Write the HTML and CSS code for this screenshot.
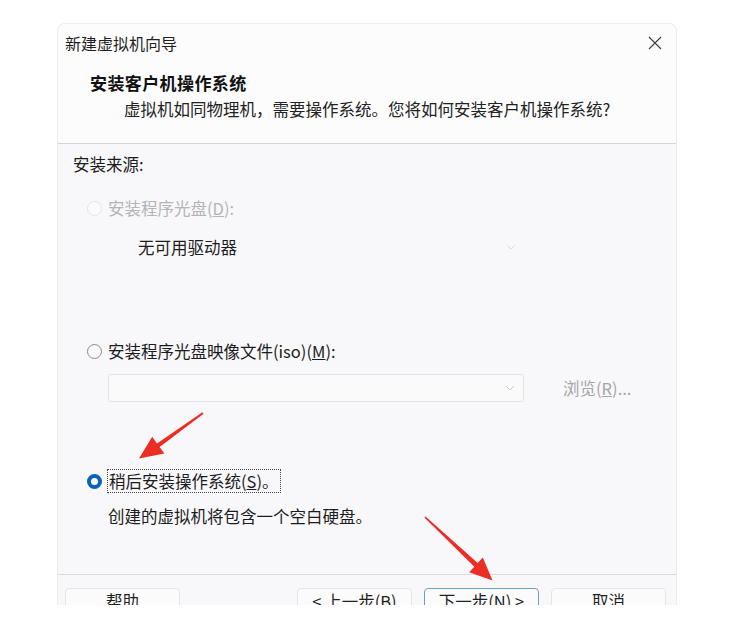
FILE: index.html
```html
<!DOCTYPE html>
<html lang="zh-CN">
<head>
<meta charset="utf-8">
<title>新建虚拟机向导</title>
<link rel="stylesheet" href="styles.css">
</head>
<body>
<div class="dialog">
  <div class="titlebar">
    <span class="title">新建虚拟机向导</span>
    <svg class="close" width="14" height="14" viewBox="0 0 14 14"><path d="M1 1 L13 13 M13 1 L1 13" stroke="#3a3a3a" stroke-width="1.1" fill="none"/></svg>
  </div>
  <div class="header">
    <div class="h-title">安装客户机操作系统</div>
    <div class="h-sub">虚拟机如同物理机，需要操作系统。您将如何安装客户机操作系统?</div>
  </div>
  <div class="body">
    <div class="label">安装来源:</div>
    <div class="radio-row disabled r1">
      <span class="radio"></span>
      <span>安装程序光盘(<u>D</u>):</span>
    </div>
    <div class="combo combo-plain">
      <span>无可用驱动器</span>
      <svg class="chev" width="10" height="6" viewBox="0 0 10 6"><path d="M1 1 L5 5 L9 1" stroke="#dcdcdc" fill="none"/></svg>
    </div>
    <div class="radio-row r2">
      <span class="radio"></span>
      <span>安装程序光盘映像文件(iso)(<u>M</u>):</span>
    </div>
    <div class="iso-row">
      <div class="combo combo-box">
        <svg class="chev" width="10" height="6" viewBox="0 0 10 6"><path d="M1 1 L5 5 L9 1" stroke="#d0d0d0" fill="none"/></svg>
      </div>
      <span class="browse">浏览(<u>R</u>)...</span>
    </div>
    <div class="radio-row r3">
      <span class="radio checked"></span>
      <span class="focus">稍后安装操作系统(<u>S</u>)。</span>
    </div>
    <div class="note">创建的虚拟机将包含一个空白硬盘。</div>
  </div>
  <div class="footer">
    <div class="btn">帮助</div>
    <div class="spacer"></div>
    <div class="btn">&lt; 上一步(<u>B</u>)</div>
    <div class="btn primary">下一步(<u>N</u>) &gt;</div>
    <div class="btn">取消</div>
  </div>
</div>
<svg class="arrows" width="738" height="629" viewBox="0 0 738 629">
  <polygon fill="#ec2d24" points="202.4,412.2 157,443.5 152.2,436.8 139,458.5 164.4,453.6 159.6,447 203.6,413.8"/>
  <polygon fill="#ec2d24" points="425.6,516.4 477.7,563.1 482.8,557.6 492.5,580.5 469.2,572.2 474.3,566.7 424.4,517.6"/>
</svg>
</body>
</html>
```
FILE: styles.css
```css
html, body {
  margin: 0;
  padding: 0;
  background: #ffffff;
}
body {
  font-family: "Noto Sans CJK SC", "Noto Sans", sans-serif;
  font-size: 16.5px;
  color: #1c1c1c;
  width: 738px;
  height: 629px;
  overflow: hidden;
  position: relative;
}
.dialog {
  margin: 23px 0 0 57px;
  width: 620px;
  height: 582px;
  overflow: hidden;
  background: #f8f8fa;
  border: 1px solid #ececee;
  border-bottom: none;
  border-radius: 8px 8px 0 0;
  box-sizing: border-box;
  display: flex;
  flex-direction: column;
}
.titlebar {
  height: 38px;
  flex: none;
  display: flex;
  align-items: center;
  justify-content: space-between;
  padding: 0 14px 0 7px;
  background: #fcfcfd;
}
.title {
  font-size: 16px;
  line-height: 24px;
  color: #1f1f1f;
}
.close {
  display: block;
}
.header {
  height: 82px;
  flex: none;
  box-sizing: border-box;
  background: #fcfcfd;
  border-bottom: 1px solid #d4d4d6;
  padding: 9px 0 0 32px;
}
.h-title {
  font-weight: bold;
  font-size: 17px;
  letter-spacing: 0.4px;
  line-height: 24px;
  color: #111;
}
.h-sub {
  line-height: 24px;
  margin: 2px 0 0 34px;
  color: #222;
}
.body {
  height: 430px;
  flex: none;
  box-sizing: border-box;
  padding: 8px 0 0 15px;
}
.label {
  line-height: 24px;
}
.radio-row {
  display: flex;
  align-items: center;
  gap: 6px;
  line-height: 24px;
  margin-left: 14px;
}
.r1 { margin-top: 20px; }
.r2 { margin-top: 78px; }
.r3 { margin-top: 68px; }
.disabled {
  color: #b4b4b6;
}
.radio {
  width: 15px;
  height: 15px;
  border-radius: 50%;
  border: 1px solid #8a8a8a;
  box-sizing: border-box;
  background: #fbfbfb;
  flex: none;
}
.disabled .radio {
  border-color: #e4e4e6;
}
.radio.checked {
  border: 4px solid #0a62b8;
  background: #ffffff;
}
.focus {
  outline: 1px dotted #444;
  outline-offset: 0;
  padding: 0 1px;
  line-height: 22px;
}
.combo {
  width: 416px;
  height: 28px;
  box-sizing: border-box;
  display: flex;
  align-items: center;
  justify-content: space-between;
  padding: 0 8px 0 30px;
}
.combo-plain {
  margin: 13px 0 0 35px;
}
.iso-row {
  display: flex;
  align-items: center;
  margin: 11px 0 0 35px;
}
.combo-box {
  border: 1px solid #e3e3e5;
  border-radius: 3px;
  background: #fafafa;
  justify-content: flex-end;
}
.browse {
  margin-left: 39px;
  color: #a6a6a8;
  line-height: 24px;
}
.note {
  margin: 12px 0 0 35px;
  line-height: 24px;
}
.footer {
  flex: 1;
  border-top: 1px solid #dadadc;
  display: flex;
  align-items: flex-start;
  gap: 12px;
  padding: 13px 0 0 7px;
}
.spacer {
  flex: 1;
}
.btn {
  width: 115px;
  height: 32px;
  box-sizing: border-box;
  border: 1px solid #e6e6e8;
  border-radius: 4px;
  background: #fbfbfb;
  display: flex;
  align-items: flex-start;
  justify-content: center;
  padding-top: 1px;
  line-height: 22px;
  color: #1f1f1f;
  flex: none;
}
.btn:last-child {
  margin-right: 10px;
}
.btn.primary {
  border: 1px solid #6e9fbf;
}
.arrows {
  position: absolute;
  left: 0;
  top: 0;
  pointer-events: none;
}
```
